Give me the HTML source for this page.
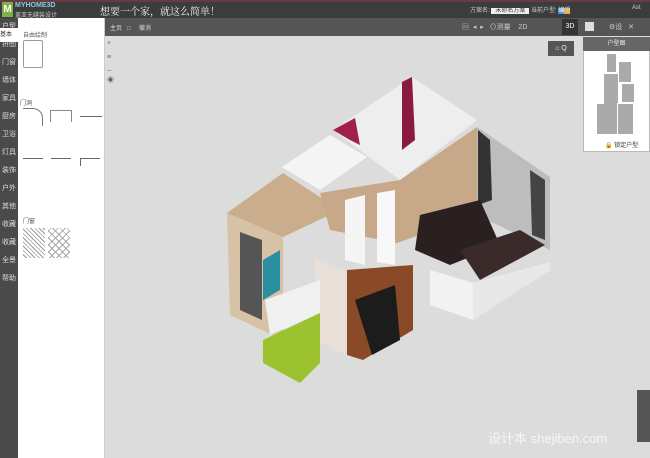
<!DOCTYPE html>
<html><head><meta charset="utf-8"><style>
*{margin:0;padding:0;box-sizing:border-box}
body{width:650px;height:458px;overflow:hidden;background:#dcdcdc;font-family:"Liberation Sans","Noto Sans CJK SC",sans-serif;position:relative}
.a{position:absolute}
.side{left:0;top:18px;width:18px;height:440px;background:#4a4a4a}
.side div{color:#ddd;font-size:7px;height:18px;line-height:18px;text-align:center}
.pan{left:18px;top:18px;width:87px;height:440px;background:#fff;border-right:1px solid #ccc}
.lbl{font-size:6px;color:#555}
</style></head><body>
<div class="a" style="left:0;top:0;width:650px;height:18px;background:#3b3d3c;border-top:2px solid #6a3a44"></div>
<div class="a" style="left:2px;top:2px;width:11px;height:15px;background:#7cb342;color:#fff;font-size:10px;font-weight:bold;line-height:15px;text-align:center">M</div>
<div class="a" style="left:15px;top:2px;font-size:7px;color:#8cd;font-weight:bold">MYHOME3D</div>
<div class="a" style="left:15px;top:10px;font-size:6px;color:#ccc">盖亚无缝装设计</div>
<div class="a" style="left:100px;top:3px;font-size:10px;color:#eee;font-family:'Noto Serif CJK SC',serif">想要一个家，就这么简单！</div>
<div class="a" style="left:470px;top:5px;font-size:6px;color:#ccc">方案名: <span style="background:#eee;color:#333;padding:0 4px">未命名方案</span> 当前户型: <span style="background:#4a90d9;color:#fff">编</span><span style="background:#e8b040">辑</span></div>
<div class="a" style="left:632px;top:5px;font-size:6px;color:#ccc">Ast</div>
<div class="a" style="left:105px;top:18px;width:545px;height:18px;background:#555"></div>
<div class="a" style="left:110px;top:23px;font-size:6px;color:#ddd">主页 &nbsp; □ &nbsp; &nbsp; 撤消</div>
<div class="a" style="left:462px;top:22px;font-size:7px;color:#ccc">▤ &nbsp;◂ &nbsp;▸ &nbsp; ⊙测量 &nbsp; &nbsp;2D</div>
<div class="a" style="left:562px;top:19px;width:16px;height:16px;background:#333;color:#fff;font-size:7px;text-align:center;line-height:16px">3D</div>
<div class="a" style="left:585px;top:22px;width:9px;height:9px;background:#ddd"></div>
<div class="a" style="left:609px;top:22px;font-size:7px;color:#ccc">⚙设 &nbsp; ✕</div>
<div class="side a"><div>户型</div><div>拼图</div><div>门窗</div><div>墙体</div><div>家具</div><div>厨房</div><div>卫浴</div><div>灯具</div><div>装饰</div><div>户外</div><div>其他</div><div>收藏</div><div>收藏</div><div>全景</div><div>帮助</div></div>
<div class="a" style="left:0;top:28px;width:18px;height:14px;background:#fff;font-size:6px;line-height:14px;color:#333">基本</div>
<div class="pan a">
<div class="a lbl" style="left:5px;top:12px">自由绘制</div>
<div class="a" style="left:5px;top:22px;width:20px;height:28px;border:1px solid #999;border-radius:2px"></div>
<div class="a lbl" style="left:2px;top:80px">门洞</div>
<div class="a" style="left:5px;top:90px;width:20px;height:18px;border-top:1px solid #777;border-right:1px solid #777;border-radius:0 10px 0 0"></div>
<div class="a" style="left:32px;top:92px;width:22px;height:12px;border:1px solid #888;border-bottom:none"></div>
<div class="a" style="left:62px;top:98px;width:22px;height:1px;background:#666"></div>
<div class="a" style="left:5px;top:140px;width:20px;height:1px;background:#666"></div>
<div class="a" style="left:33px;top:140px;width:20px;height:1px;background:#666"></div>
<div class="a" style="left:62px;top:140px;width:20px;height:8px;border-top:1px solid #666;border-left:1px solid #666"></div>
<div class="a lbl" style="left:5px;top:198px">门窗</div>
<div class="a" style="left:5px;top:210px;width:22px;height:30px;background:repeating-linear-gradient(45deg,#fff 0 2px,#999 2px 3px)"></div>
<div class="a" style="left:30px;top:210px;width:22px;height:30px;background:repeating-linear-gradient(45deg,transparent 0 4px,#aaa 4px 5px),repeating-linear-gradient(-45deg,#fff 0 4px,#aaa 4px 5px)"></div>
</div>
<div class="a" style="left:107px;top:40px;font-size:7px;color:#666">+<br><br>≡<br><br>−<br>◉</div>
<div class="a" style="left:548px;top:41px;width:26px;height:15px;background:#555;color:#eee;font-size:7px;text-align:center;line-height:15px">⌂ Q</div>
<div class="a" style="left:583px;top:37px;width:67px;height:115px;background:#fff;border:1px solid #bbb"></div>
<div class="a" style="left:583px;top:37px;width:67px;height:14px;background:#666;color:#eee;font-size:6px;text-align:center;line-height:14px">户型图</div>
<div class="a" style="left:607px;top:54px;width:9px;height:18px;background:#aaa"></div>
<div class="a" style="left:618px;top:61px;width:14px;height:22px;background:#aaa;border:1px solid #fff"></div>
<div class="a" style="left:604px;top:74px;width:14px;height:30px;background:#aaa"></div>
<div class="a" style="left:622px;top:84px;width:12px;height:18px;background:#aaa"></div>
<div class="a" style="left:597px;top:104px;width:20px;height:30px;background:#aaa"></div>
<div class="a" style="left:617px;top:103px;width:17px;height:32px;background:#aaa;border:1px solid #fff"></div>
<div class="a" style="left:605px;top:140px;font-size:6px;color:#333">🔒 锁定户型</div>
<div class="a" style="left:637px;top:390px;width:13px;height:52px;background:#555"></div>
<svg class="a" style="left:0;top:0" width="650" height="458">
<polygon points="227,213 283,173 340,210 283,237" fill="#c9ad8c"/>
<polygon points="227,213 283,237 283,340 230,315" fill="#d8c2a6"/>
<polygon points="240,232 262,240 262,320 240,310" fill="#555"/>
<polygon points="282,167 330,135 367,157 320,190" fill="#f5f5f5"/>
<polygon points="333,130 412,77 477,120 400,180" fill="#eeeeee"/>
<polygon points="333,130 355,118 360,145 350,140" fill="#a0204a"/>
<polygon points="402,82 412,77 415,140 402,150" fill="#8a1a40"/>
<polygon points="320,193 400,180 477,127 480,213 397,243 330,230" fill="#c7a889"/>
<polygon points="477,127 550,177 550,250 477,215" fill="#bdbdbd"/>
<polygon points="478,130 490,140 492,200 478,205" fill="#333"/>
<polygon points="530,170 545,180 545,240 532,235" fill="#444"/>
<polygon points="420,215 480,200 500,245 450,265 415,250" fill="#2a2020"/>
<polygon points="460,250 520,230 545,245 480,280" fill="#3a2a2a"/>
<polygon points="430,270 473,283 550,262 550,270 473,320 430,305" fill="#f2f2f2"/>
<polygon points="473,283 550,262 550,270 473,320" fill="#e8e8e8"/>
<polygon points="347,270 413,265 413,330 363,360 347,355" fill="#8a4a28"/>
<polygon points="355,300 395,285 400,340 372,355" fill="#1c1c1c"/>
<polygon points="315,258 345,270 345,355 315,340" fill="#e8e0d8"/>
<polygon points="263,260 280,250 280,290 263,300" fill="#2a8fa0"/>
<polygon points="265,300 320,280 320,313 270,335" fill="#f0f0f0"/>
<polygon points="263,340 320,313 320,363 300,383 263,363" fill="#9cc230"/>
<polygon points="345,200 365,195 365,265 345,260" fill="#f5f5f5"/>
<polygon points="377,193 395,190 395,265 377,262" fill="#f8f8f8"/>
</svg>
<div class="a" style="left:488px;top:428px;font-size:13px;color:rgba(255,255,255,.75)">设计本 shejiben.com</div>
</body></html>
